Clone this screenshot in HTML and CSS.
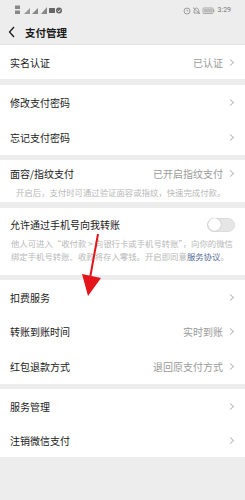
FILE: index.html
```html
<!DOCTYPE html>
<html lang="zh">
<head>
<meta charset="utf-8">
<link rel="stylesheet" href="styles.css">
</head>
<body>
<div class="page">
  <div class="status">
    <div class="st-left">
      <svg width="48" height="11" viewBox="0 0 48 11">
        <rect x="0" y="0.5" width="5" height="3.5" fill="#888"/>
        <rect x="0" y="5.5" width="5" height="3.5" fill="#888"/>
        <path d="M9 9 L15 3 L15 9 Z" fill="#999"/>
        <path d="M17 9 L23 3 L23 9 Z" fill="#888"/>
        <path d="M26 9 L32 2 L32 9 Z" fill="#888"/>
        <rect x="34" y="3" width="6" height="5" rx="0.5" fill="#666"/>
        <circle cx="44" cy="5.5" r="3" fill="#666"/>
        <path d="M42.5 5.5 L44 7 L45.5 4.5" stroke="#fff" stroke-width="0.8" fill="none"/>
      </svg>
    </div>
    <div class="st-right">
      <svg width="32" height="9" viewBox="0 0 32 9">
        <circle cx="4" cy="5" r="3" fill="none" stroke="#888" stroke-width="0.8"/>
        <path d="M4 3.5 V5 H5.2" stroke="#888" stroke-width="0.7" fill="none"/>
        <path d="M11 7 Q11 2 13.5 2 Q16 2 16 7 Z" fill="none" stroke="#888" stroke-width="0.8"/>
        <path d="M10 1.5 L17 8" stroke="#888" stroke-width="0.8"/>
        <rect x="20" y="2" width="10" height="5.5" rx="0.8" fill="none" stroke="#999" stroke-width="0.8"/>
        <rect x="21" y="3" width="8" height="3.5" fill="#bbb"/>
        <rect x="30.3" y="3.5" width="1" height="2.5" fill="#999"/>
      </svg>
      <span class="time">3:29</span>
    </div>
  </div>
  <div class="nav">
    <svg class="back" width="8" height="12" viewBox="0 0 8 12"><path d="M6 1 L1.5 6 L6 11" fill="none" stroke="#1a1a1a" stroke-width="1.3"/></svg>
    <span class="nav-title">支付管理</span>
  </div>

  <div class="section s1">
    <div class="row"><span class="label">实名认证</span><span class="value">已认证<i class="chev"></i></span></div>
  </div>

  <div class="section">
    <div class="row"><span class="label">修改支付密码</span><span class="value"><i class="chev"></i></span></div>
    <div class="row"><span class="label">忘记支付密码</span><span class="value"><i class="chev"></i></span></div>
  </div>

  <div class="section s3">
    <div class="row-top"><span class="label">面容/指纹支付</span><span class="value">已开启指纹支付<i class="chev"></i></span></div>
    <div class="sub">开启后，支付时可通过验证面容或指纹，快速完成付款。</div>
  </div>

  <div class="section s4">
    <div class="row-top"><span class="label">允许通过手机号向我转账</span><span class="toggle"><span class="knob"></span></span></div>
    <div class="desc">他人可进入“收付款 &gt; 向银行卡或手机号转账”，向你的微信绑定手机号转账、收款将存入零钱。开启即同意<span class="link">服务协议</span>。</div>
  </div>

  <div class="section s5">
    <div class="row"><span class="label">扣费服务</span><span class="value"><i class="chev"></i></span></div>
    <div class="row"><span class="label">转账到账时间</span><span class="value">实时到账<i class="chev"></i></span></div>
    <div class="row"><span class="label">红包退款方式</span><span class="value">退回原支付方式<i class="chev"></i></span></div>
  </div>

  <div class="section s6">
    <div class="row"><span class="label">服务管理</span><span class="value"><i class="chev"></i></span></div>
    <div class="row"><span class="label">注销微信支付</span><span class="value"><i class="chev"></i></span></div>
  </div>

  <svg class="arrow" width="30" height="70" viewBox="0 0 30 70">
    <path d="M22 0 L14 44" stroke="#e3151a" stroke-width="2" fill="none"/>
    <path d="M6 40 L25 44 L12 62 Z" fill="#e3151a"/>
  </svg>
</div>
</body>
</html>
```

FILE: styles.css
```css
* { box-sizing: border-box; margin: 0; padding: 0; }
html, body { background: #ededed; }
body {
  width: 245px;
  height: 500px;
  font-family: "Noto Sans CJK SC", "Noto Sans", sans-serif;
  color: #1a1a1a;
  overflow: hidden;
}
.page { position: relative; }
.status {
  height: 20px;
  display: flex;
  justify-content: space-between;
  align-items: center;
  padding: 0 14px 0 15px;
}
.st-left svg { display: block; }
.st-right { display: flex; align-items: center; gap: 3px; }
.st-right svg { display: block; }
.time { font-family: "Roboto", sans-serif; font-size: 7px; color: #777; }
.nav {
  height: 25px;
  display: flex;
  align-items: center;
  padding-left: 8px;
  gap: 9px;
  border-bottom: 1px solid #e4e4e4;
}
.back { display: block; }
.nav-title { font-size: 10.5px; font-weight: 700; }
.section { background: #fff; margin-top: 5.5px; }
.section.s1 { margin-top: 0; }
.row {
  height: 35px;
  display: flex;
  align-items: center;
  justify-content: space-between;
  padding: 0 10px;
}
.s1 .row { height: 34px; }
.s5 .row { height: 34.67px; }
.s6 .row { height: 34px; }
.label { font-size: 10px; }
.value {
  display: flex;
  align-items: center;
  font-size: 10px;
  color: #9a9a9a;
}
.chev {
  display: inline-block;
  width: 5px;
  height: 5px;
  border-top: 1px solid #bdbdbd;
  border-right: 1px solid #bdbdbd;
  transform: rotate(45deg);
  margin-left: 5px;
  margin-right: 2px;
}
.s3 { height: 42px; }
.row-top {
  display: flex;
  align-items: center;
  justify-content: space-between;
  padding: 4px 10px 0;
  height: 22px;
}
.sub {
  font-size: 8.4px;
  color: #b8b8b8;
  padding-left: 16px;
  line-height: 12px;
  margin-top: 4px;
}
.s4 { height: 67px; }
.s4 .row-top { height: 26px; padding-top: 8px; }
.desc {
  font-size: 8.4px;
  color: #b8b8b8;
  line-height: 13px;
  padding: 3px 12px 0 11px;
}
.link { color: #576b95; }
.toggle {
  width: 28px;
  height: 14px;
  border-radius: 7px;
  background: #e6e6e6;
  border: 1px solid #dcdcdc;
  display: flex;
  align-items: center;
}
.knob {
  width: 13px;
  height: 13px;
  border-radius: 50%;
  background: #fff;
  box-shadow: 0 0 1px rgba(0,0,0,0.4);
  margin-left: -0.5px;
}
.arrow {
  position: absolute;
  left: 76px;
  top: 234px;
}
```
